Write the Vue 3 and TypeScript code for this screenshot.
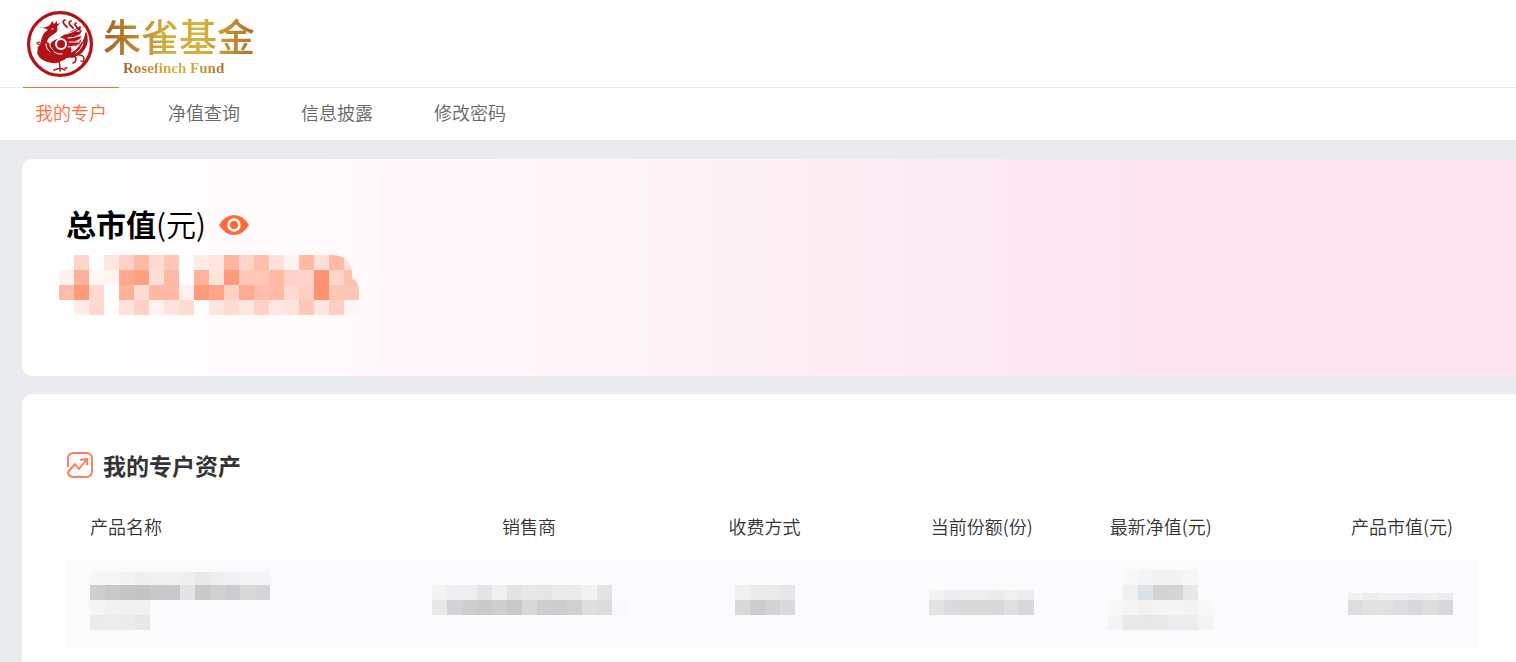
<script setup lang="ts">
interface MosaicRow {
  y: number
  h: number
  colors: string[]
}
interface Mosaic {
  width: number
  rows: MosaicRow[]
}

const tabs: string[] = ['我的专户', '净值查询', '信息披露', '修改密码']

const amountRows: string[][] = [
  ['', '#ffd5ca', '', '#ffe6df', '#ffd0c3', '#ffb9a3', '#ffdad1', '#ffc7b7', '', '#ffeae4', '#ffe6df', '#ffb7a0', '#ffd5ca', '#ffbfad', '#ffe1da', '#fff3f2', '#ffb9a4', '#ffdfd8', '#ffb9a4', '#ffe3dc'],
  ['#fff1ed', '#ffb09a', '#fff8f7', '#fff5f3', '#ffa88c', '#ffa083', '#ffded5', '#ffb8a3', '', '#ffb39b', '#ffe4dd', '#ff9a7a', '#ffc7b8', '#ffc7b8', '#ffb9a6', '#ffd1c6', '#ffd4ca', '#ff9270', '#ffd5ca', '#ffc0af'],
  ['#ffbda9', '#ff9b7c', '#ffdad1', '', '#ffb099', '#ffdcd3', '#ffb8a3', '#ffb8a3', '#fff0ef', '#ff9b7b', '#ffa486', '#ffd1c5', '#ffab91', '#ffbeab', '#ffb9a5', '#ffd8cf', '#ffcfc3', '#ff9270', '#ffc5b5', '#ffc6b7'],
  ['', '#ffece7', '#ffd9cf', '', '#ffe2da', '#ffd0c3', '#fff2ef', '#ffe3dc', '#ffdbd2', '', '#ffe5de', '#ffdbd2', '#ffe6df', '#ffd0c4', '#ffe8e3', '#ffe3dd', '#ffc9ba', '#ffe6e1', '#ffcfc3', '#fff5f4'],
]

const columns: string[] = ['产品名称', '销售商', '收费方式', '当前份额(份)', '最新净值(元)', '产品市值(元)']

const cells: Mosaic[] = [
  {
    width: 180,
    rows: [
      { y: 2, h: 13, colors: ['#f6f6f6', '#f6f6f6', '#f3f3f3', '#efefef', '#f0f1f1', '#f1f1f1', '#eeeeee', '#e9e9e9', '#eeeef0', '#f1f1f3', '#f5f5f7', '#f5f5f7'] },
      { y: 15, h: 15, colors: ['#cfcecf', '#cbc9c6', '#c4c7c9', '#c5c3c4', '#c7c9c9', '#c6cacc', '#e3e4e6', '#cbc9c7', '#d0d1d3', '#cbcccd', '#d9d9d7', '#d4d6d7'] },
      { y: 30, h: 15, colors: ['#f5f5f7', '#f1f1f3', '#f1f1f3', '#f1f1f3'] },
      { y: 45, h: 15, colors: ['#ebebec', '#ececed', '#ebebeb', '#e7e7e8'] },
    ],
  },
  {
    width: 195,
    rows: [
      { y: 15, h: 15, colors: ['#f4f3f4', '#eceef1', '#efeff1', '#e4e5e7', '#f0f0f2', '#e4e3e3', '#e8e8e9', '#e4e6e8', '#ebebec', '#e9eaec', '#f2f2f2', '#e5e3e4', '#fafbfe'] },
      { y: 30, h: 15, colors: ['#e9e8e6', '#d1d3d7', '#ccced0', '#cacacb', '#cfcfd1', '#cac8c9', '#d7d8d8', '#cdced0', '#cccccf', '#d1cfcf', '#dcdee0', '#dedcdb', '#f7f9fe'] },
    ],
  },
  {
    width: 60,
    rows: [
      { y: 15, h: 15, colors: ['#f1eff0', '#ebebeb', '#e9eaea', '#e5e7e8'] },
      { y: 30, h: 15, colors: ['#d9d9d9', '#cdcdcf', '#d3d3d5', '#d9dadc'] },
    ],
  },
  {
    width: 105,
    rows: [
      { y: 20, h: 10, colors: ['#f3f3f3', '#ececee', '#efeff1', '#eeeef0', '#eaebed', '#f0f0f0', '#eaecee'] },
      { y: 30, h: 15, colors: ['#e4e2e3', '#dadbdd', '#d8d9da', '#dad8d8', '#d7d8da', '#dedfe1', '#d7d8d9'] },
    ],
  },
  {
    width: 105,
    rows: [
      { y: 0, h: 15, colors: ['', '#f8f8f9', '#f5f5f6', '#f2f2f3', '#f3f3f3', '#f7f7f8', ''] },
      { y: 15, h: 15, colors: ['', '#f2efed', '#dce1e6', '#d1d2d4', '#d4d5d7', '#e8e8e8', ''] },
      { y: 30, h: 15, colors: ['#f8f8f9', '#f5f5f6', '#f2f2f3', '#f5f5f5', '#f5f5f6', '#f3f3f3', '#f8f8f9'] },
      { y: 45, h: 15, colors: ['#f4f4f6', '#e9e9ea', '#e8e8ea', '#e9e9e9', '#ededef', '#ebecee', '#f4f4f5'] },
    ],
  },
  {
    width: 105,
    rows: [
      { y: 23, h: 7, colors: ['#f2f2f3', '#ececec', '#f1f1f2', '#f1f1f2', '#ececec', '#f0f0f1', '#ebecee'] },
      { y: 30, h: 15, colors: ['#dcdddf', '#e3e1e2', '#e1e1e3', '#dbdde0', '#d8d9dc', '#dededf', '#d7d8d9'] },
    ],
  },
]
</script>

<template>
  <div class="page">
    <header class="brand">
      <svg class="seal" viewBox="0 0 68 68" aria-hidden="true">
        <circle cx="34" cy="34" r="31.4" fill="#fff" stroke="#b01318" stroke-width="3.2" />
        <g fill="#b01318">
          <path d="M15 18q5 0 9-3l2-4 2 3 3-3v3l3-1-3 4q2 4-3 7-6 3-7 8l3 2q4-5 9-5l3-3q9-5 19-10-2 4-5 6 4 0 6-2-1 5-6 6 4 1 6 0-2 4-7 5l5 1q-3 5-9 5 2 6-3 10l-4 3-7 3q-10 1-17-5-5-5-1-12 3-3 2-5 1-8 7-11-4-3-10-2z" />
          <path d="M60 21q4 10-1 18-5 9-20 9-7 3-12-1l12-3q9-1 13-7l2-8 2 4 2-5z" />
        </g>
        <g fill="none" stroke="#fff" stroke-linecap="round">
          <path d="M26 19h1M20 34q0 5 4 8M24 32q-1 5 3 8M28 42q4 3 8 2M40 24q7-2 12-5M42 28q6 0 10-2M43 32h10M42 37l7-1M46 41q7-3 9-9M50 43q5-3 7-9" />
          <circle cx="35" cy="34" r="5" fill="#b01318" stroke-width="2" />
        </g>
        <g fill="none" stroke="#b01318" stroke-linecap="round">
          <path d="M39 10q-3 1-1 4l3 3M45 11q-3 1-1 4l3 3M50 13q-2 1 0 3l2 3M54 17q-1 1 0 3" stroke-width="1.8" />
          <path d="M15 33q-3-2-4 0 1 2 4 2M16 37q-4-1-4 1 1 2 4 1M18 42q-4-1-4 1 1 2 5 1M22 46q-3 0-2 2l4-1" stroke-width="1.2" />
          <path d="M33 48l1 10M28 60l6-2 5 2M34 57v4M46 47q4-1 4 2t-3 4M53 45q5 0 5 4t-3 2M39 58h2" stroke-width="1.5" />
        </g>
      </svg>
      <div class="wordmark">
        <span class="wordmark-cn">朱雀基金</span>
        <span class="wordmark-en">Rosefinch Fund</span>
      </div>
    </header>

    <nav class="tabs">
      <a v-for="(tab, i) in tabs" :key="tab" href="#" :class="{ active: i === 0 }">{{ tab }}</a>
    </nav>

    <main>
      <section class="card total">
        <h1>
          <span><b>总市值</b>(元)</span>
          <button type="button" aria-label="显示或隐藏金额">
            <svg viewBox="0 0 30 20" width="30" height="20">
              <path d="M0 10Q6 0 15 0t15 10q-6 10-15 10T0 10z" fill="#ff6b38" />
              <circle cx="15" cy="10" r="5.5" fill="none" stroke="#fff" stroke-width="2.4" />
            </svg>
          </button>
        </h1>
        <svg class="amount" viewBox="0 0 300 60" width="300" height="60" shape-rendering="crispEdges" aria-hidden="true">
          <clipPath id="amount-edge">
            <path d="M0 0H275Q291 2 293 15V23Q300 28 300 34V60H30Q15 60 15 58V45H0z" />
          </clipPath>
          <g clip-path="url(#amount-edge)">
            <template v-for="(row, y) in amountRows" :key="y">
              <rect v-for="(color, x) in row" :key="x" :x="x * 15" :y="y * 15" width="15" height="15" :fill="color || 'none'" />
            </template>
          </g>
        </svg>
      </section>

      <section class="card assets">
        <h2>
          <svg viewBox="0 0 26 26" width="26" height="26" fill="none" stroke="#ff8058" stroke-width="2" aria-hidden="true">
            <path d="M1 15V7q0-6 6-6h12q6 0 6 6v12q0 6-6 6H7q-6 0-6-5" />
            <path d="M1 20l7-8 4 5 8-10M13 8l7-1v6" stroke-linejoin="round" />
          </svg>
          <span>我的专户资产</span>
        </h2>
        <table>
          <thead>
            <tr><th v-for="name in columns" :key="name" scope="col">{{ name }}</th></tr>
          </thead>
          <tbody>
            <tr>
              <td v-for="(cell, i) in cells" :key="i">
                <svg :width="cell.width" height="60" shape-rendering="crispEdges" aria-hidden="true">
                  <template v-for="(row, r) in cell.rows" :key="r">
                    <rect v-for="(color, c) in row.colors" :key="c" :x="c * 15" :y="row.y" width="15" :height="row.h" :fill="color || 'none'" />
                  </template>
                </svg>
              </td>
            </tr>
          </tbody>
        </table>
      </section>
    </main>
  </div>
</template>

<style>
body {
  margin: 0;
  background: #e9ebef;
}
</style>

<style scoped>
.page {
  min-height: 100vh;
  overflow: hidden;
  background: #e9ebef;
  color: #333;
  font-family: "Noto Sans CJK SC", sans-serif;
  font-size: 18px;
  font-weight: 350;
}
.brand {
  display: flex;
  align-items: center;
  gap: 9px;
  height: 87px;
  padding-left: 26px;
  background: #fff;
}
.seal {
  width: 68px;
  height: 68px;
}
.wordmark {
  display: flex;
  flex-direction: column;
}
.wordmark span {
  color: transparent;
  background: linear-gradient(90deg, #a4622b, #d1a93a 40%, #d8b23b 65%, #ab702c);
  background-clip: text;
}
.wordmark-cn {
  padding-top: 4px;
  font-family: "Liberation Serif", "Noto Sans CJK SC", serif;
  font-size: 38px;
  line-height: 46px;
  font-weight: 500;
}
.wordmark-en {
  align-self: flex-start;
  margin-left: 20px;
  font: bold 15px/15px "Liberation Serif", serif;
}
.tabs {
  display: flex;
  gap: 37px;
  height: 52px;
  padding-left: 23px;
  border-top: 1px solid #e9ebef;
  background: #fff;
}
.tabs a {
  box-sizing: border-box;
  margin-top: -1px;
  padding: 0 12px;
  border-top: 1px solid transparent;
  line-height: 48px;
  color: #666;
  text-decoration: none;
}
.tabs a.active {
  border-color: #ff6b38;
  color: #ff6b38;
}
main {
  display: flex;
  flex-direction: column;
  gap: 18px;
  padding: 19px 0 0 22px;
}
.card {
  border-radius: 10px 0 0 10px;
  background: #fff;
}
.total {
  padding: 44px 37px 61px;
  background: linear-gradient(90deg, #fff, #fff5f8 38%, #fceaf2 62%, #fce4ef 78%, #fce3f0);
}
h1 {
  display: flex;
  align-items: center;
  gap: 13px;
  margin: 0 0 8px;
  padding-left: 7px;
  font-size: 30px;
  line-height: 44px;
  font-weight: 350;
  color: #000;
}
h1 span {
  padding-bottom: 4px;
  line-height: 40px;
}
h1 b {
  font-weight: 700;
}
h1 button {
  padding: 0;
  border: 0;
  background: none;
  line-height: 0;
}
.amount {
  display: block;
}
.assets {
  padding: 55px 39px 40px 45px;
}
h2 {
  display: flex;
  align-items: center;
  gap: 10px;
  margin: 0;
  font-size: 23px;
  line-height: 32px;
  font-weight: 700;
}
table {
  width: 100%;
  table-layout: fixed;
  border-collapse: collapse;
}
th,
td {
  text-align: center;
}
th {
  box-sizing: border-box;
  height: 79px;
  padding: 10px 0 0;
  font-weight: 350;
}
td {
  padding: 10px 0 18px;
  background: #fbfbfd;
}
td svg {
  display: inline-block;
  vertical-align: top;
}
th:nth-child(1) { width: 338px; }
th:nth-child(2) { width: 17.6%; }
th:nth-child(3) { width: 15.8%; }
th:nth-child(4) { width: 15%; }
th:nth-child(5) { width: 10.4%; }
th:first-child,
td:first-child {
  box-sizing: border-box;
  padding-left: 23px;
  text-align: left;
}
th:last-child,
td:last-child {
  padding-right: 24px;
  text-align: right;
}
</style>
